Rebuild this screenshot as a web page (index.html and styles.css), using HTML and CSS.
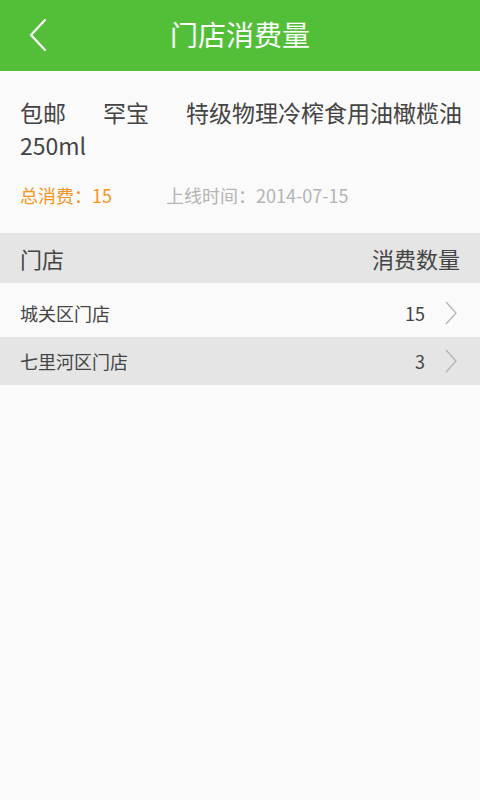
FILE: index.html
```html
<!DOCTYPE html>
<html lang="zh-CN">
<head>
<meta charset="utf-8">
<link rel="stylesheet" href="styles.css">
</head>
<body>
<header class="topbar">
  <span class="back">
    <svg width="20" height="34" viewBox="0 0 20 34"><path d="M17 2 L3 17 L17 32" fill="none" stroke="#fff" stroke-width="2.2" stroke-linecap="round" stroke-linejoin="round"/></svg>
  </span>
  <h1 class="title">门店消费量</h1>
</header>
<section class="product">
  <p class="name"><span class="line"><span class="gap">包邮</span><span class="gap">罕宝</span>特级物理冷榨食用油橄榄油</span><br>250ml</p>
  <div class="meta">
    <span class="total">总消费：15</span>
    <span class="date">上线时间：2014-07-15</span>
  </div>
</section>
<div class="thead">
  <span>门店</span>
  <span>消费数量</span>
</div>
<ul class="rows">
  <li class="row first"><span class="store">城关区门店</span><span class="num">15</span><svg class="chev" width="14" height="24" viewBox="0 0 14 24"><path d="M2 1 L12 12 L2 23" fill="none" stroke="#b5b5b5" stroke-width="1.3"/></svg></li>
  <li class="row alt"><span class="store">七里河区门店</span><span class="num">3</span><svg class="chev" width="14" height="24" viewBox="0 0 14 24"><path d="M2 1 L12 12 L2 23" fill="none" stroke="#b5b5b5" stroke-width="1.3"/></svg></li>
</ul>
</body>
</html>
```
FILE: styles.css
```css
html, body {
  margin: 0;
  padding: 0;
  background: #fafafa;
  font-family: "Noto Sans CJK SC", "Noto Sans", sans-serif;
  color: #444;
}
.topbar {
  height: 71px;
  background: #53bf39;
  display: flex;
  align-items: center;
  justify-content: center;
  position: relative;
}
.back {
  position: absolute;
  left: 28px;
  top: 18px;
  display: flex;
}
.title {
  margin: 0 0 4px;
  font-size: 28px;
  font-weight: normal;
  color: #fff;
  line-height: 1;
}
.product {
  padding: 25px 16px 25px 20px;
}
.name {
  margin: 0;
  font-size: 23px;
  line-height: 33px;
  color: #444;
}
.line {
  white-space: nowrap;
}
.gap {
  margin-right: 37px;
}
.meta {
  margin-top: 20px;
  font-size: 18px;
  line-height: 26px;
  display: flex;
}
.total {
  color: #f7931e;
  width: 146px;
}
.date {
  color: #b4b4b4;
}
.thead {
  height: 50px;
  background: #e5e5e5;
  display: flex;
  justify-content: space-between;
  align-items: center;
  padding: 0 20px;
  font-size: 22px;
  color: #444;
}
.rows {
  list-style: none;
  margin: 0;
  padding: 0;
}
.row {
  height: 48px;
  display: flex;
  align-items: center;
  padding: 0 22px 0 20px;
  font-size: 18px;
  color: #444;
}
.row.first {
  height: 54px;
  padding-top: 6px;
  box-sizing: border-box;
}
.row.alt {
  background: #e5e5e5;
}
.store {
  flex: 1;
}
.num {
  margin-right: 19px;
}
.chev {
  display: block;
}
```
